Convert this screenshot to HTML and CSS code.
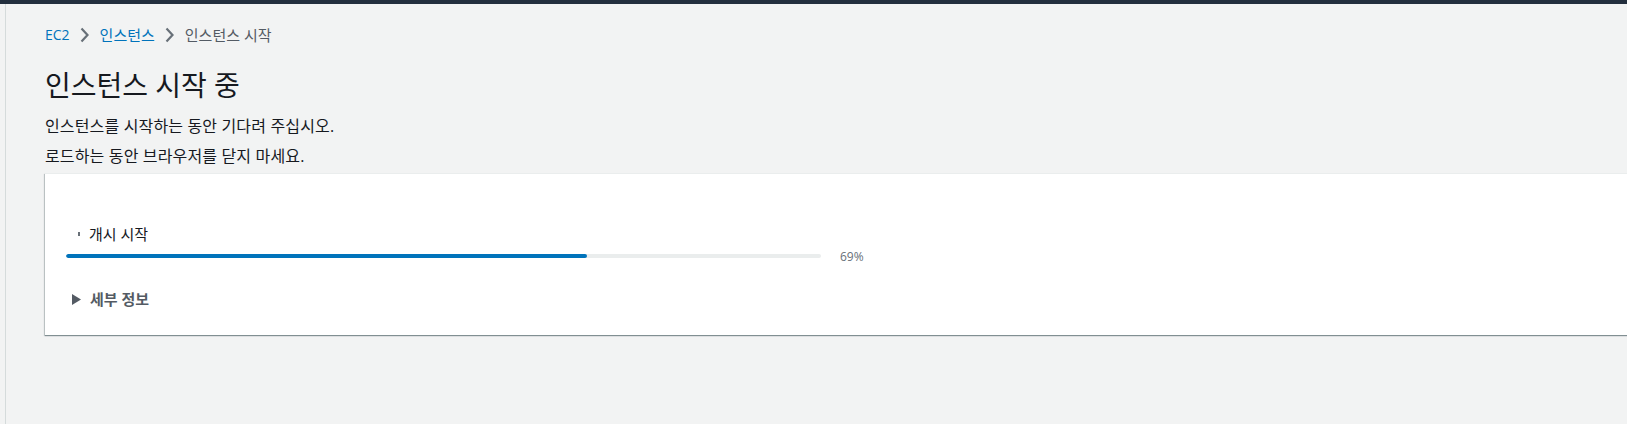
FILE: index.html
```html
<!DOCTYPE html>
<html lang="ko">
<head>
<meta charset="utf-8">
<title>인스턴스 시작 중</title>
<link rel="stylesheet" href="styles.css">
</head>
<body>
<div class="topbar"></div>
<div class="layout">
  <div class="nav-edge"></div>
  <main class="content">
    <nav class="breadcrumbs">
      <a class="crumb-link" href="#">EC2</a>
      <svg class="chev" width="11" height="18" viewBox="0 0 11 18"><path d="M2.5 2.5 L8.5 9 L2.5 15.5" fill="none" stroke="#687078" stroke-width="2.2"/></svg>
      <a class="crumb-link crumb-ko" href="#">인스턴스</a>
      <svg class="chev" width="11" height="18" viewBox="0 0 11 18"><path d="M2.5 2.5 L8.5 9 L2.5 15.5" fill="none" stroke="#687078" stroke-width="2.2"/></svg>
      <span class="crumb-current">인스턴스 시작</span>
    </nav>
    <h1 class="title">인스턴스 시작 중</h1>
    <p class="desc desc-first">인스턴스를 시작하는 동안 기다려 주십시오.</p>
    <p class="desc desc-second">로드하는 동안 브라우저를 닫지 마세요.</p>
    <section class="card">
      <div class="step"><span class="dot"></span><span class="step-label">개시 시작</span></div>
      <div class="progress-row">
        <div class="track"><div class="fill" style="width:69%"></div></div>
        <span class="pct">69%</span>
      </div>
      <div class="details">
        <svg class="caret" width="9" height="11" viewBox="0 0 9 11"><path d="M0 0 L9 5.5 L0 11 Z" fill="#545b64"/></svg>
        <span class="details-label">세부 정보</span>
      </div>
    </section>
  </main>
</div>
</body>
</html>
```
FILE: styles.css
```css
html, body {
  margin: 0;
  padding: 0;
}
body {
  background: #f2f3f3;
  font-family: "Open Sans", "Noto Sans CJK KR", sans-serif;
  color: #16191f;
  overflow: hidden;
  width: 1627px;
  height: 424px;
}
.topbar {
  height: 4px;
  background: #232f3e;
}
.layout {
  display: flex;
  height: 420px;
}
.nav-edge {
  width: 5px;
  flex: none;
  border-right: 1px solid #d5dbdb;
}
.content {
  flex: 1;
  padding-left: 39px;
  min-width: 0;
}
.breadcrumbs {
  display: flex;
  align-items: center;
  height: 20px;
  margin-top: 21px;
  font-size: 14px;
  line-height: 20px;
}
.crumb-link {
  color: #0073bb;
  text-decoration: none;
}
.crumb-ko {
  font-size: 15px;
}
.chev {
  margin: 0 10px 0 9px;
}
.crumb-current {
  color: #545b64;
  font-size: 15px;
}
.title {
  margin: 22px 0 0;
  font-size: 28px;
  line-height: 36px;
  font-weight: 400;
  color: #16191f;
}
.desc {
  margin: 0;
  font-size: 16px;
  line-height: 20px;
  letter-spacing: 0.15px;
}
.desc-first {
  margin-top: 13px;
}
.desc-second {
  margin-top: 10px;
}
.card {
  margin-top: 7px;
  width: 1600px;
  background: #fff;
  border-top: 1px solid #eaeded;
  box-shadow: 0 1px 1px 0 rgba(0, 28, 36, 0.35), -1px 1px 1px 0 rgba(0, 28, 36, 0.18);
  padding: 50px 0 26px 21px;
}
.step {
  display: flex;
  align-items: center;
  height: 20px;
  font-size: 15px;
  line-height: 20px;
  padding-left: 12px;
}
.dot {
  width: 2px;
  height: 4px;
  background: #687078;
  margin-right: 9px;
}
.step-label {
  color: #16191f;
}
.progress-row {
  display: flex;
  align-items: center;
  height: 20px;
  margin-top: 2px;
}
.track {
  width: 755px;
  height: 4px;
  border-radius: 2px;
  background: #eaeded;
  overflow: hidden;
}
.fill {
  height: 100%;
  background: #0073bb;
  border-radius: 2px;
}
.pct {
  margin-left: 19px;
  font-size: 12px;
  color: #687078;
}
.details {
  display: flex;
  align-items: center;
  height: 20px;
  margin-top: 23px;
  padding-left: 6px;
}
.caret {
  margin-right: 9px;
}
.details-label {
  font-size: 15px;
  line-height: 20px;
  font-weight: 700;
  color: #545b64;
}
```
